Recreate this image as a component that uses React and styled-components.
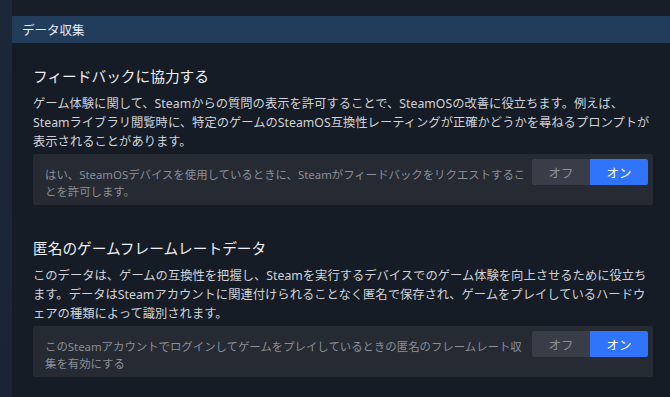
import React from 'react';
import styled, { createGlobalStyle } from 'styled-components';

const GlobalStyle = createGlobalStyle`
  html, body {
    margin: 0;
    padding: 0;
    background: #1b2535;
    font-family: "Noto Sans", "Noto Sans CJK JP", sans-serif;
  }
`

const Page = styled.div`
  width: 670px;
  height: 397px;
  display: flex;
  overflow: hidden;
`
const SideStrip = styled.div`
  width: 12px;
  flex-shrink: 0;
  background: linear-gradient(#1c2737, #1a2434);
`
const Main = styled.div`
  flex: 1;
  display: flex;
  flex-direction: column;
  background: #161c25;
`
const TopStrip = styled.div`
  height: 16px;
  background: #181e28;
`
const Header = styled.div`
  height: 27px;
  display: flex;
  align-items: center;
  padding-left: 10px;
  background: #223d5c;
  color: #e6eaf0;
  font-size: 12.5px;
`
const Content = styled.div`
  padding: 0 17px 0 21px;
`
const Section = styled.section`
  padding: 23px 0 10px;
`
const Title = styled.h2`
  margin: 0;
  font-size: 14.7px;
  font-weight: 400;
  line-height: 20px;
  color: #eceff3;
`
const Description = styled.p`
  margin: 8px 0 3px;
  font-size: 12.3px;
  line-height: 19px;
  color: #cfd3d9;
`
const Card = styled.div`
  display: flex;
  align-items: flex-start;
  gap: 6px;
  padding: 5px 5px 5px 12px;
  background: #252a33;
  border-radius: 2px;
`
const CardText = styled.div`
  flex: 1;
  padding-top: 7px;
  font-size: 11.4px;
  line-height: 17px;
  color: #8a8f98;
`
const Toggle = styled.div`
  display: flex;
  flex-shrink: 0;
  width: 116px;
  height: 26px;
  border-radius: 2px;
  overflow: hidden;
`
const ToggleOption = styled.div`
  flex: 1;
  display: flex;
  align-items: center;
  justify-content: center;
  font-size: 12.5px;
  background: ${p => (p.$active ? '#2f74fb' : '#393d47')};
  color: ${p => (p.$active ? '#ffffff' : '#8d9199')};
`

const sections = [
  {
    title: 'フィードバックに協力する',
    desc: 'ゲーム体験に関して、Steamからの質問の表示を許可することで、SteamOSの改善に役立ちます。例えば、Steamライブラリ閲覧時に、特定のゲームのSteamOS互換性レーティングが正確かどうかを尋ねるプロンプトが表示されることがあります。',
    option: 'はい、SteamOSデバイスを使用しているときに、Steamがフィードバックをリクエストすることを許可します。',
  },
  {
    title: '匿名のゲームフレームレートデータ',
    desc: 'このデータは、ゲームの互換性を把握し、Steamを実行するデバイスでのゲーム体験を向上させるために役立ちます。データはSteamアカウントに関連付けられることなく匿名で保存され、ゲームをプレイしているハードウェアの種類によって識別されます。',
    option: 'このSteamアカウントでログインしてゲームをプレイしているときの匿名のフレームレート収集を有効にする',
  },
]

const App = () => {
  return (
    <Page>
      <GlobalStyle />
      <SideStrip />
      <Main>
        <TopStrip />
        <Header>データ収集</Header>
        <Content>
          {sections.map(s => (
            <Section key={s.title}>
              <Title>{s.title}</Title>
              <Description>{s.desc}</Description>
              <Card>
                <CardText>{s.option}</CardText>
                <Toggle>
                  <ToggleOption>オフ</ToggleOption>
                  <ToggleOption $active>オン</ToggleOption>
                </Toggle>
              </Card>
            </Section>
          ))}
        </Content>
      </Main>
    </Page>
  );
}

export default App;
